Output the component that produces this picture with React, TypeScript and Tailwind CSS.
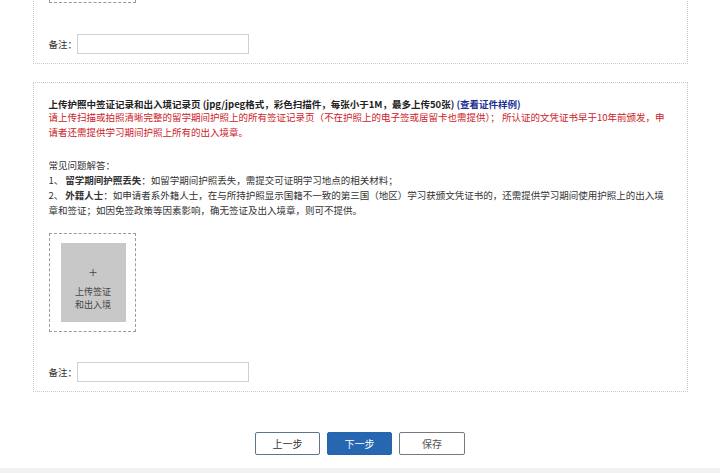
import React from "react";

const font = { fontFamily: '"Noto Sans CJK SC", "Noto Sans", sans-serif' };

function Remark() {
  return (
    <div className="flex items-center text-[9.5px] text-[#333]">
      <span>备注：</span>
      <input type="text" className="h-[20px] w-[172px] border border-[#cfcfcf] bg-white outline-none" />
    </div>
  );
}

function UploadBox({ label }: { label?: [string, string] }) {
  return (
    <div className="h-[99px] w-[87px] border border-dashed border-[#9a9a9a] pl-[11px] pt-[9px]">
      {label && (
        <div className="flex h-[79px] w-[65px] flex-col items-center bg-[#c8c8c8] pt-[20px] text-[#444]">
          <span className="text-[15px] font-light leading-[18px]">+</span>
          <span className="mt-[4px] text-[9px] leading-[13px]">{label[0]}</span>
          <span className="text-[9px] leading-[13px]">{label[1]}</span>
        </div>
      )}
    </div>
  );
}

export default function App() {
  return (
    <div className="h-[473px] overflow-hidden bg-white" style={font}>
      {/* previous section, mostly scrolled away */}
      <div className="mx-auto -mt-[112px] w-[655px] border border-dotted border-[#c8c8c8] px-[15px] pb-[9px] pt-[15px]">
        <UploadBox />
        <div className="mt-[31px]">
          <Remark />
        </div>
      </div>

      <div className="mx-auto mt-[18px] w-[655px] border border-dotted border-[#c8c8c8] px-[15px] pb-[9px] pt-[15px] text-[9.5px] leading-[15px] text-[#333]">
        <p className="font-bold leading-[12px] text-[#222]">
          上传护照中签证记录和出入境记录页 (jpg/jpeg格式，彩色扫描件，每张小于1M，最多上传50张){" "}
          <span className="text-[#1c2f92]">(查看证件样例)</span>
        </p>
        <p className="whitespace-nowrap text-[#cc2229]">
          请上传扫描或拍照清晰完整的留学期间护照上的所有签证记录页（不在护照上的电子签或居留卡也需提供）； 所认证的文凭证书早于10年前颁发，申
          <br />
          请者还需提供学习期间护照上所有的出入境章。
        </p>
        <div className="mt-[18px] whitespace-nowrap">
          <p>常见问题解答：</p>
          <p>
            1、{"\u2009"}<b className="font-bold">留学期间护照丢失</b>：如留学期间护照丢失，需提交可证明学习地点的相关材料；
          </p>
          <p>
            2、{"\u2009"}<b className="font-bold">外籍人士</b>：如申请者系外籍人士，在与所持护照显示国籍不一致的第三国（地区）学习获颁文凭证书的，还需提供学习期间使用护照上的出入境
            <br />
            章和签证；如因免签政策等因素影响，确无签证及出入境章，则可不提供。
          </p>
        </div>
        <div className="mt-[15px]">
          <UploadBox label={["上传签证", "和出入境"]} />
        </div>
        <div className="mt-[30px]">
          <Remark />
        </div>
      </div>

      <div className="mt-[40px] flex justify-center gap-[7px] text-[10px]">
        <button type="button" className="h-[23px] w-[65px] rounded-[2px] border border-[#5d7591] bg-white text-[#333]">
          上一步
        </button>
        <button type="button" className="h-[23px] w-[65px] rounded-[2px] border border-[#2563ad] bg-[#2767b2] text-white">
          下一步
        </button>
        <button type="button" className="h-[23px] w-[66px] rounded-[2px] border border-[#707b86] bg-white text-[#555]">
          保存
        </button>
      </div>
      <div className="mt-[13px] h-[20px] bg-[#f1f1f1]" />
    </div>
  );
}
